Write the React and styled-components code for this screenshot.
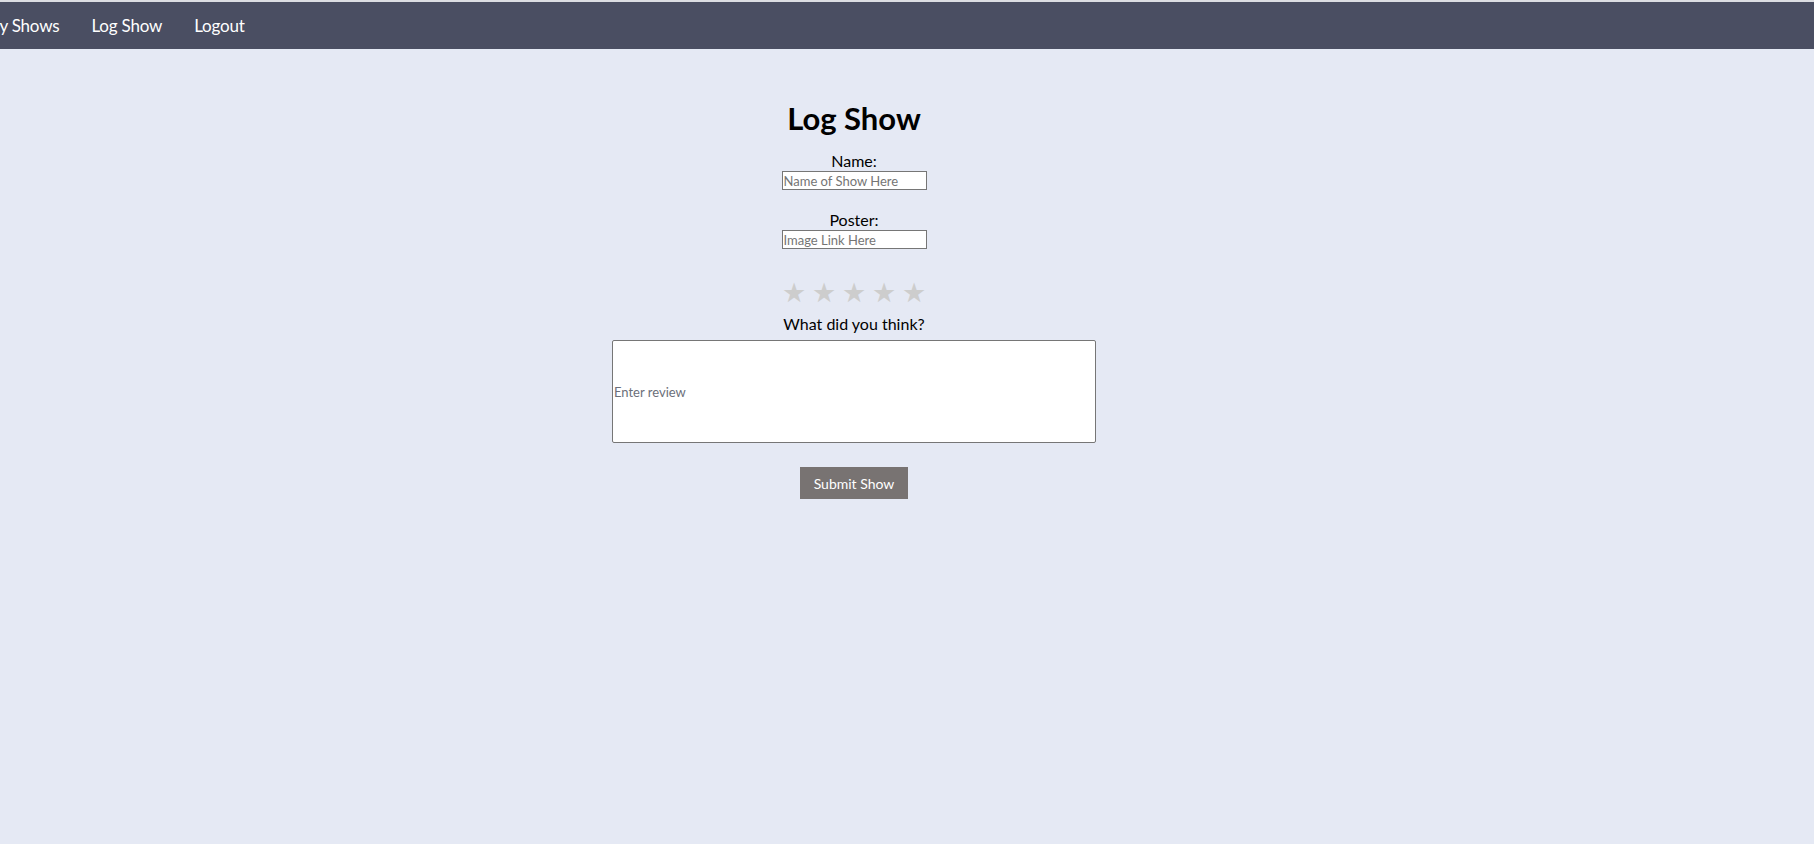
import React from "react";
import styled, { createGlobalStyle } from "styled-components";

const GlobalStyle = createGlobalStyle`
  html, body {
    margin: 0;
    padding: 0;
    background: #e5e9f4;
    font-family: Lato, "Open Sans", "Liberation Sans", sans-serif;
    color: #000;
  }
  body { overflow: hidden; }
`;

const Page = styled.div`
  min-height: 844px;
  background: #e5e9f4;
`;

const NavBar = styled.nav`
  height: 47px;
  border-top: 2px solid #dcdde2;
  background: #4a4e62;
  display: flex;
  align-items: center;
  overflow: hidden;
`;

const NavList = styled.ul`
  list-style: none;
  margin: 0 0 0 -16px;
  padding: 0;
  display: flex;
  gap: 32px;
`;

const NavLink = styled.a`
  color: #ffffff;
  font-size: 17px;
  letter-spacing: -0.2px;
  text-decoration: none;
  white-space: nowrap;
`;

const Main = styled.main`
  display: flex;
  justify-content: center;
  padding-right: 106px;
`;

const Form = styled.form`
  display: flex;
  flex-direction: column;
  align-items: center;
  padding-top: 50px;
`;

const Title = styled.h1`
  margin: 0 0 14px;
  font-size: 31px;
  font-weight: 700;
  line-height: 38px;
`;

const Field = styled.div`
  display: flex;
  flex-direction: column;
  align-items: center;
  margin-bottom: ${(p) => p.$gap || 0}px;
`;

const Label = styled.label`
  font-size: 16px;
  line-height: 20px;
`;

const TextInput = styled.input`
  box-sizing: border-box;
  width: 145px;
  height: 19px;
  padding: 0 1px;
  border: 1px solid #767676;
  background: #fff;
  font-family: inherit;
  font-size: 13px;
  outline: none;
  &::placeholder { color: #757575; }
`;

const Stars = styled.div`
  display: flex;
  gap: 4px;
  margin-bottom: 5px;
`;

const Star = styled.span`
  font-family: "DejaVu Sans", sans-serif;
  font-size: 27px;
  line-height: 32px;
  width: 26px;
  text-align: center;
  color: #cdcdcd;
  cursor: pointer;
`;

const ReviewInput = styled.input`
  box-sizing: border-box;
  width: 484px;
  height: 103px;
  margin-top: 6px;
  padding: 0 1px;
  border: 1px solid #767676;
  border-radius: 2px;
  background: #fff;
  font-family: inherit;
  font-size: 13px;
  outline: none;
  &::placeholder { color: #6b6f7a; }
`;

const SubmitButton = styled.button`
  margin-top: 24px;
  width: 108px;
  height: 32px;
  border: none;
  background: #787372;
  color: #fff;
  font-family: inherit;
  font-size: 14px;
  cursor: pointer;
`;

export default function App() {
  return (
    <Page>
      <GlobalStyle />
      <NavBar>
        <NavList>
          <li><NavLink href="#">My Shows</NavLink></li>
          <li><NavLink href="#">Log Show</NavLink></li>
          <li><NavLink href="#">Logout</NavLink></li>
        </NavList>
      </NavBar>
      <Main>
        <Form onSubmit={(e) => e.preventDefault()}>
          <Title>Log Show</Title>
          <Field $gap={20}>
            <Label htmlFor="name">Name:</Label>
            <TextInput id="name" placeholder="Name of Show Here" />
          </Field>
          <Field $gap={28}>
            <Label htmlFor="poster">Poster:</Label>
            <TextInput id="poster" placeholder="Image Link Here" />
          </Field>
          <Stars>
            {[1, 2, 3, 4, 5].map((n) => (
              <Star key={n}>★</Star>
            ))}
          </Stars>
          <Field>
            <Label htmlFor="review">What did you think?</Label>
            <ReviewInput id="review" placeholder="Enter review" />
          </Field>
          <SubmitButton type="submit">Submit Show</SubmitButton>
        </Form>
      </Main>
    </Page>
  );
}
